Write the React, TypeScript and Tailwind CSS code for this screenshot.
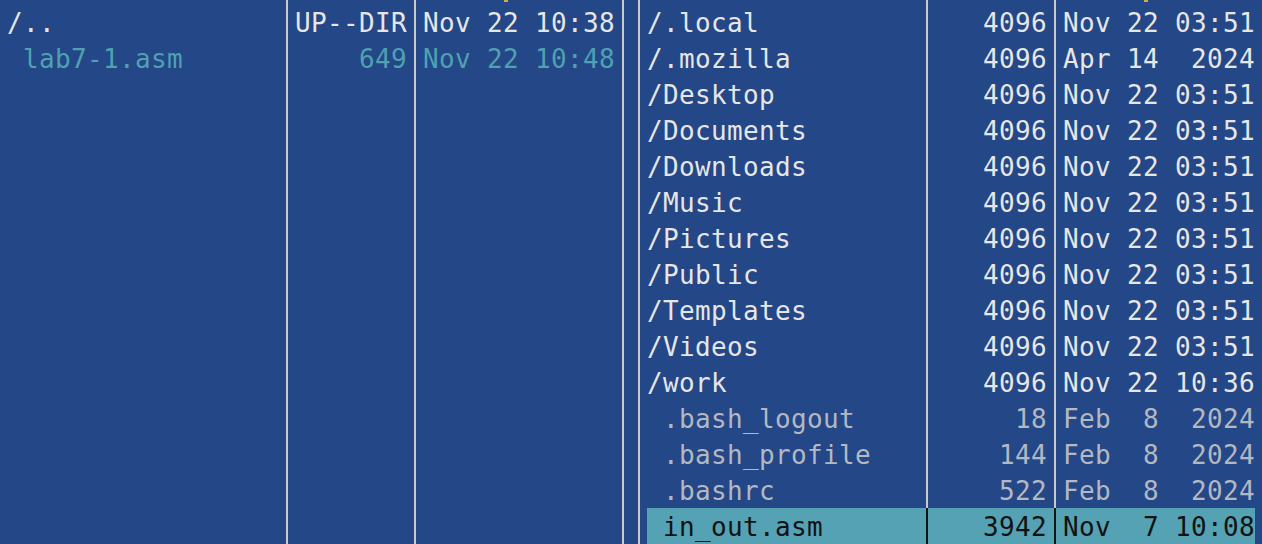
import React from 'react';

type Kind = 'dir' | 'file' | 'src';

interface Entry {
  name: string;
  size: string;
  date: string;
  kind: Kind;
  selected?: boolean;
}

const leftEntries: Entry[] = [
  { name: '/..', size: 'UP--DIR', date: 'Nov 22 10:38', kind: 'dir' },
  { name: ' lab7-1.asm', size: '649', date: 'Nov 22 10:48', kind: 'src' },
];

const rightEntries: Entry[] = [
  { name: '/.local', size: '4096', date: 'Nov 22 03:51', kind: 'dir' },
  { name: '/.mozilla', size: '4096', date: 'Apr 14  2024', kind: 'dir' },
  { name: '/Desktop', size: '4096', date: 'Nov 22 03:51', kind: 'dir' },
  { name: '/Documents', size: '4096', date: 'Nov 22 03:51', kind: 'dir' },
  { name: '/Downloads', size: '4096', date: 'Nov 22 03:51', kind: 'dir' },
  { name: '/Music', size: '4096', date: 'Nov 22 03:51', kind: 'dir' },
  { name: '/Pictures', size: '4096', date: 'Nov 22 03:51', kind: 'dir' },
  { name: '/Public', size: '4096', date: 'Nov 22 03:51', kind: 'dir' },
  { name: '/Templates', size: '4096', date: 'Nov 22 03:51', kind: 'dir' },
  { name: '/Videos', size: '4096', date: 'Nov 22 03:51', kind: 'dir' },
  { name: '/work', size: '4096', date: 'Nov 22 10:36', kind: 'dir' },
  { name: ' .bash_logout', size: '18', date: 'Feb  8  2024', kind: 'file' },
  { name: ' .bash_profile', size: '144', date: 'Feb  8  2024', kind: 'file' },
  { name: ' .bashrc', size: '522', date: 'Feb  8  2024', kind: 'file' },
  { name: ' in_out.asm', size: '3942', date: 'Nov  7 10:08', kind: 'file', selected: true },
];

const ROWS = 15;

const kindColor: Record<Kind, string> = {
  dir: 'text-[#e6e6e6]',
  file: 'text-[#b3b8c2]',
  src: 'text-[#4fa1b2]',
};

function Sep({ dark }: { dark?: boolean }) {
  return (
    <div className="flex w-4 shrink-0 justify-center">
      <div className={dark ? 'w-[2px] bg-[#141414]' : 'w-[2px] bg-[#cacaca]'} />
    </div>
  );
}

// bottom sliver of the column header line, scrolled mostly out of view
function HeaderStrip({ leftBorder }: { leftBorder: boolean }) {
  return (
    <div className="flex h-[4px]">
      {leftBorder && <Sep />}
      <div className="w-[272px] shrink-0" />
      <Sep />
      <div className="w-[112px] shrink-0" />
      <Sep />
      <div className="w-[192px] shrink-0">
        <div className="ml-[81px] h-[2px] w-[4px] bg-[#d9a838]" />
      </div>
      <Sep />
    </div>
  );
}

function Row({ entry, leftBorder }: { entry?: Entry; leftBorder: boolean }) {
  const sel = !!entry?.selected;
  const color = sel ? 'text-[#121212]' : entry ? kindColor[entry.kind] : '';
  return (
    <div className="flex h-[36px]">
      {leftBorder && <Sep />}
      <div className={`flex ${sel ? 'bg-[#54a2b3]' : ''} ${color}`}>
        <div className="w-[272px] shrink-0 overflow-hidden whitespace-pre pt-[1px]">{entry?.name ?? ''}</div>
        <Sep dark={sel} />
        <div className="w-[112px] shrink-0 overflow-hidden whitespace-pre pt-[1px] text-right">{entry?.size ?? ''}</div>
        <Sep dark={sel} />
        <div className="w-[192px] shrink-0 overflow-hidden whitespace-pre pt-[1px]">{entry?.date ?? ''}</div>
      </div>
      <Sep />
    </div>
  );
}

function Panel({ entries, leftBorder }: { entries: Entry[]; leftBorder: boolean }) {
  return (
    <div className="flex shrink-0 flex-col">
      <HeaderStrip leftBorder={leftBorder} />
      {Array.from({ length: ROWS }, (_, i) => (
        <Row key={i} entry={entries[i]} leftBorder={leftBorder} />
      ))}
    </div>
  );
}

export default function App() {
  return (
    <div
      className="h-[544px] w-[1262px] overflow-hidden bg-[#234787] text-[26px] leading-[36px] tracking-[0.35px]"
      style={{ fontFamily: '"DejaVu Sans Mono", "Liberation Mono", monospace' }}
    >
      <div className="flex pl-[7px]">
        <Panel entries={leftEntries} leftBorder={false} />
        <Panel entries={rightEntries} leftBorder />
      </div>
    </div>
  );
}
